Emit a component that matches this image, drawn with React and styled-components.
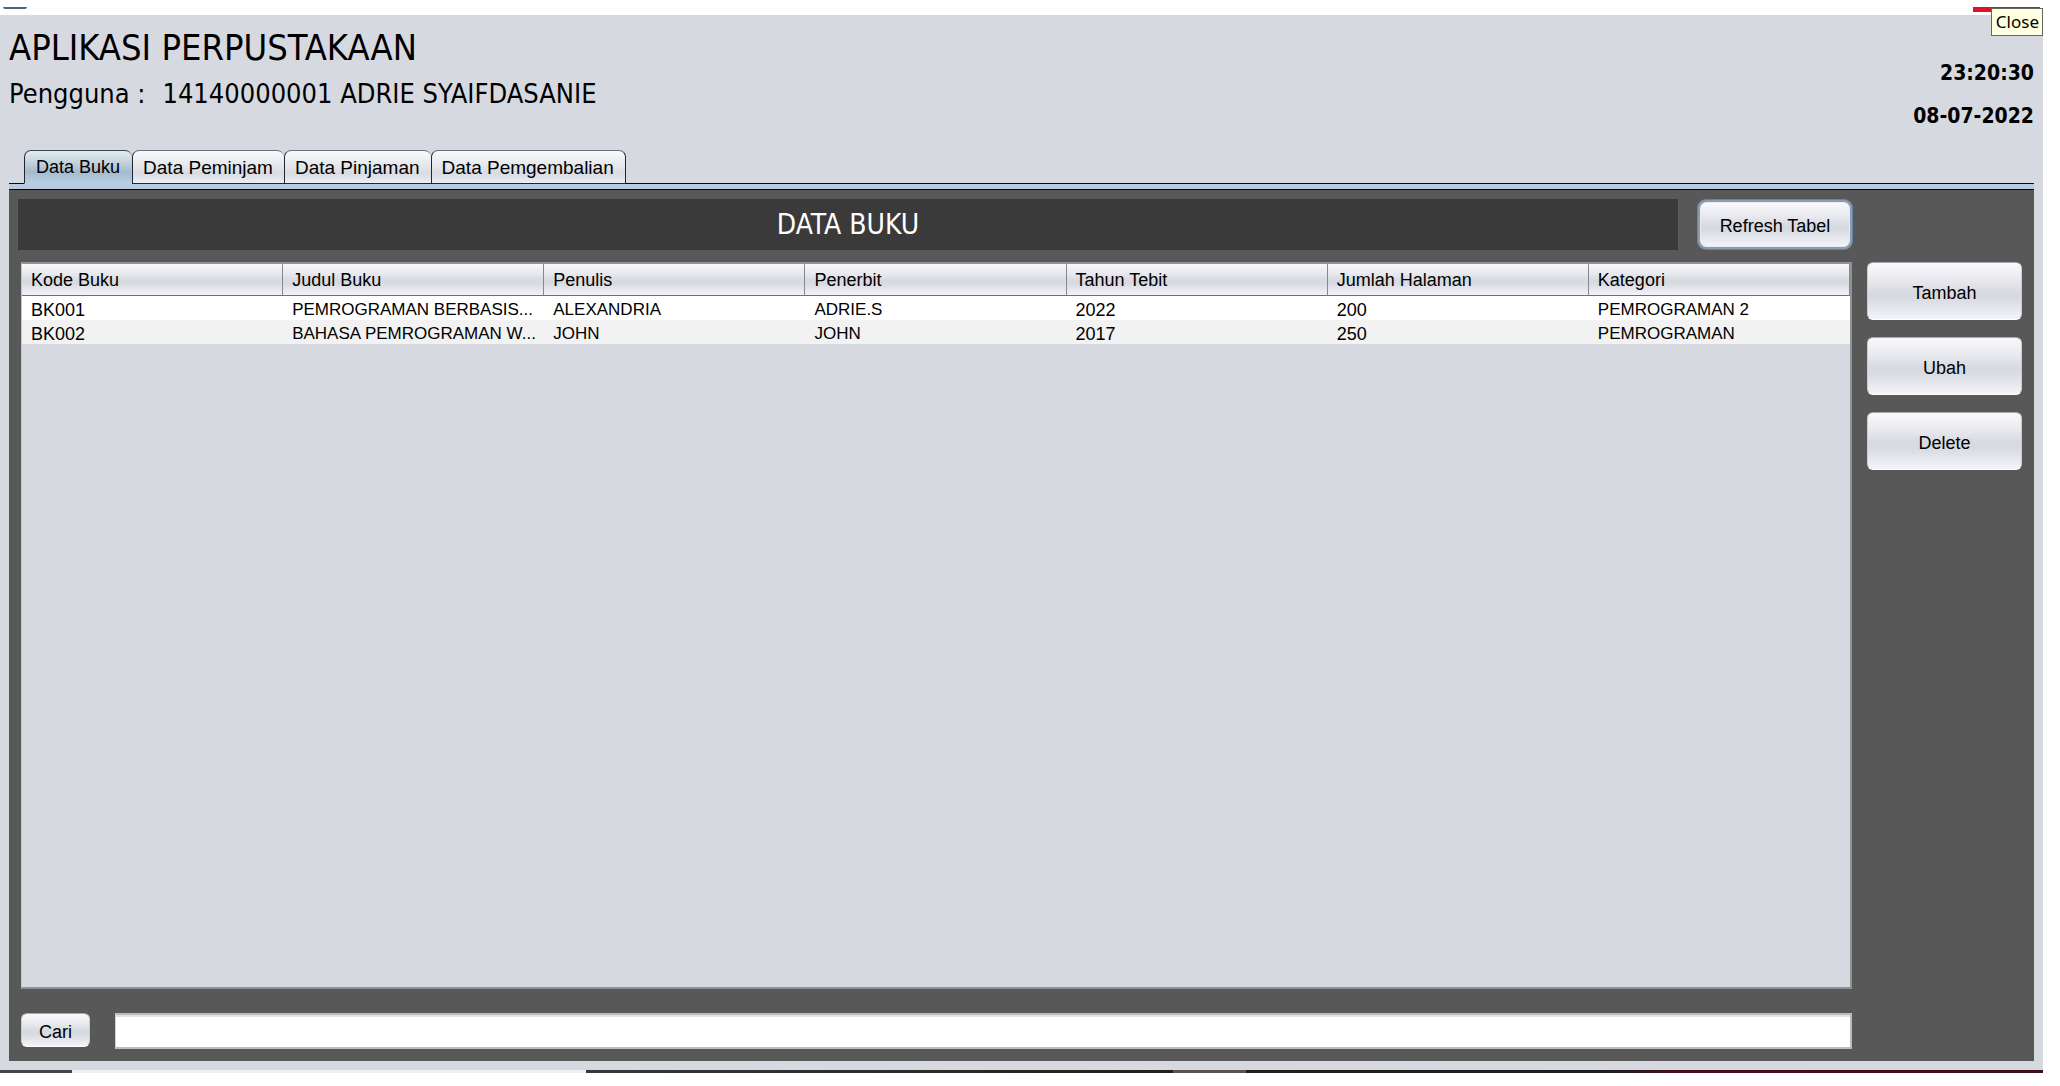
import React, { useState } from "react";
import styled, { createGlobalStyle, css } from "styled-components";

const GlobalStyle = createGlobalStyle`
  *, *::before, *::after { box-sizing: border-box; }
  body { margin: 0; background: #fff; color: #000; }
  body, button, input { font-family: "Liberation Sans", Arial, sans-serif; font-size: 18px; }
`;

const heading = '"DejaVu Sans Condensed", Tahoma, sans-serif';
const metal = "linear-gradient(#f9f9fb 0%, #e9eaef 30%, #d8dae1 52%, #d8dae1 62%, #f2f4fa 100%)";

const Screen = styled.div`
  min-height: 100vh;
  display: flex;
  flex-direction: column;
  padding: 0 17px 13px 0;
`;

const TitleBar = styled.div`
  position: relative;
  height: 15px;
  flex: none;
  display: flex;
  justify-content: space-between;
  padding: 7px 3px 0 3px;
`;

const WindowIcon = styled.span`
  width: 24px;
  height: 2px;
  border-radius: 0 0 4px 4px;
  background: #4b6681;
`;

const CloseButton = styled.button`
  width: 67px;
  height: 5px;
  padding: 0;
  border: 0;
  background: #dc1428;
`;

const Tooltip = styled.span`
  position: absolute;
  top: 8px;
  right: 0;
  height: 28px;
  padding: 0 3px 0 4px;
  border: 1px solid #66665c;
  background: #ffffe1;
  font: 17px/26px "Noto Sans", "Segoe UI", sans-serif;
`;

const Frame = styled.main`
  flex: 1;
  display: flex;
  flex-direction: column;
  padding: 0 9px 9px;
  background: #d6d9e0;
`;

const Header = styled.header`
  display: flex;
  justify-content: space-between;
  height: 135px;
`;

const Titles = styled.div`
  padding-top: 9px;
  font-family: ${heading};
`;

const AppTitle = styled.h1`
  margin: 0;
  font-size: 36px;
  font-weight: 400;
  line-height: 48px;
`;

const User = styled.p`
  margin: 4px 0 0;
  display: flex;
  gap: 17px;
  font-size: 27px;
  line-height: 36px;
`;

const Clock = styled.div`
  display: flex;
  flex-direction: column;
  padding-top: 37px;
  text-align: right;
  font: bold 21px/43px ${heading};
`;

const TabList = styled.div`
  display: flex;
  padding-left: 15px;
  border-bottom: 1px solid #000a1c;
`;

const Tab = styled.button`
  height: 34px;
  margin-bottom: -1px;
  padding: 1px 11px 0 10px;
  border: 1px solid #1d2733;
  border-top-color: #66707c;
  border-right-width: 0;
  border-radius: 7px 7px 0 0;
  background: linear-gradient(#fafafc, #e3e5ea 50%, #d9dbe2 70%, #eceef4);
  font-size: 19px;
  &:last-child { border-right-width: 1px; }
  ${(p) =>
    p.$active &&
    css`
      padding: 1px 12px 0 11px;
      border-top-color: #33475c;
      border-bottom-color: #b9cfe2;
      background: linear-gradient(#e6ebf0, #bccbd8 45%, #a3bbcd 65%, #b9cfe2);
      font-size: 18px;
    `}
`;

const TabPanel = styled.section`
  flex: 1;
  display: flex;
  flex-direction: column;
  gap: 12px;
  border-top: 5px solid #b9cbde;
  padding-bottom: 12px;
  background: #585858;
  box-shadow: inset 0 1px 0 #000a1c;
`;

const Toolbar = styled.div`
  display: flex;
  align-items: center;
  gap: 22px;
  padding: 10px 184px 0 9px;
`;

const SectionTitle = styled.h2`
  flex: 1;
  margin: 0;
  background: #3a3a3a;
  color: #fff;
  font: 400 28px/51px ${heading};
  text-align: center;
`;

const Button = styled.button`
  width: ${(p) => p.$width};
  height: ${(p) => p.$height};
  padding: 4px 0 0;
  border: 1px solid #c9ccd3;
  border-top-color: #a6a8ad;
  border-bottom-color: #fff;
  border-radius: 6px;
  background: ${metal};
  ${(p) =>
    p.$focused &&
    css`
      border-color: #e8ecf2;
      box-shadow: 0 0 0 2px #8d9bab, 0 0 0 3px #5f87ae;
    `}
`;

const Body = styled.div`
  flex: 1;
  display: grid;
  grid-template-columns: minmax(0, 1fr) 155px;
  column-gap: 15px;
  row-gap: 24px;
  grid-template-rows: 1fr auto;
  padding: 0 12px;
`;

const TableArea = styled.div`
  border: 2px solid #8f9398;
  border-left: 1px solid #c4c6ca;
  background: #d6d9e0;
`;

const Table = styled.table`
  width: 100%;
  table-layout: fixed;
  border-collapse: separate;
  border-spacing: 0;
`;

const HeadCell = styled.th`
  height: 32px;
  padding: 2px 8px 0 9px;
  border-right: 1px solid #85888f;
  border-bottom: 1px solid #6c6f76;
  background: ${metal};
  font-weight: 400;
  text-align: left;
`;

const Row = styled.tr`
  background: #fff;
  &:nth-child(even) { background: #f2f2f2; }
`;

const Cell = styled.td`
  height: 24px;
  padding: 4px 8px 0 9px;
  overflow: hidden;
  white-space: nowrap;
  font-size: ${(p) => (p.$code ? "18px" : "17px")};
  line-height: 20px;
`;

const Actions = styled.div`
  display: flex;
  flex-direction: column;
  gap: 17px;
`;

const Search = styled.form`
  display: flex;
  gap: 25px;
`;

const SearchInput = styled.input`
  flex: 1;
  height: 36px;
  padding: 0 8px;
  border: 2px solid #bcbcbc;
  border-left: 1px solid #d0d0d0;
  border-radius: 0;
  background: #fff;
  box-shadow: inset 0 2px 0 #e2e2e2;
  outline: none;
`;

const TaskbarEdge = styled.div`
  flex: none;
  height: 3px;
  background: linear-gradient(
    90deg,
    #444547 0 72px,
    #f0f0f0 72px 586px,
    #36373a 586px,
    #251f1d 1173px,
    #5a534e 1173px 1246px,
    #251f1d 1246px,
    #1c1d21 1600px,
    #45101c 1680px,
    #3c0f19
  );
`;

const tabs = ["Data Buku", "Data Peminjam", "Data Pinjaman", "Data Pemgembalian"];
const columns = ["Kode Buku", "Judul Buku", "Penulis", "Penerbit", "Tahun Tebit", "Jumlah Halaman", "Kategori"];
const codeColumns = [0, 4, 5];
const books = [
  ["BK001", "PEMROGRAMAN BERBASIS...", "ALEXANDRIA", "ADRIE.S", "2022", "200", "PEMROGRAMAN 2"],
  ["BK002", "BAHASA PEMROGRAMAN W...", "JOHN", "JOHN", "2017", "250", "PEMROGRAMAN"],
];

export default function App() {
  const [active, setActive] = useState(0);
  return (
    <>
      <GlobalStyle />
      <Screen>
        <TitleBar>
          <WindowIcon />
          <CloseButton aria-label="Close" />
          <Tooltip role="tooltip">Close</Tooltip>
        </TitleBar>
        <Frame>
          <Header>
            <Titles>
              <AppTitle>APLIKASI PERPUSTAKAAN</AppTitle>
              <User>
                <span>Pengguna :</span>
                <span>14140000001 ADRIE SYAIFDASANIE</span>
              </User>
            </Titles>
            <Clock>
              <time>23:20:30</time>
              <time dateTime="2022-07-08">08-07-2022</time>
            </Clock>
          </Header>
          <TabList role="tablist">
            {tabs.map((name, i) => (
              <Tab key={name} role="tab" aria-selected={i === active} $active={i === active} onClick={() => setActive(i)}>
                {name}
              </Tab>
            ))}
          </TabList>
          <TabPanel role="tabpanel">
            <Toolbar>
              <SectionTitle>DATA BUKU</SectionTitle>
              <Button $width="150px" $height="45px" $focused>Refresh Tabel</Button>
            </Toolbar>
            <Body>
              <TableArea>
                <Table>
                  <thead>
                    <tr>
                      {columns.map((name) => <HeadCell key={name} scope="col">{name}</HeadCell>)}
                    </tr>
                  </thead>
                  <tbody>
                    {books.map((book) => (
                      <Row key={book[0]}>
                        {book.map((value, i) => (
                          <Cell key={columns[i]} $code={codeColumns.includes(i)}>{value}</Cell>
                        ))}
                      </Row>
                    ))}
                  </tbody>
                </Table>
              </TableArea>
              <Actions>
                {["Tambah", "Ubah", "Delete"].map((name) => (
                  <Button key={name} $width="100%" $height="58px">{name}</Button>
                ))}
              </Actions>
              <Search onSubmit={(e) => e.preventDefault()}>
                <Button type="submit" $width="69px" $height="34px">Cari</Button>
                <SearchInput type="text" aria-label="Cari" />
              </Search>
            </Body>
          </TabPanel>
        </Frame>
        <TaskbarEdge />
      </Screen>
    </>
  );
}
